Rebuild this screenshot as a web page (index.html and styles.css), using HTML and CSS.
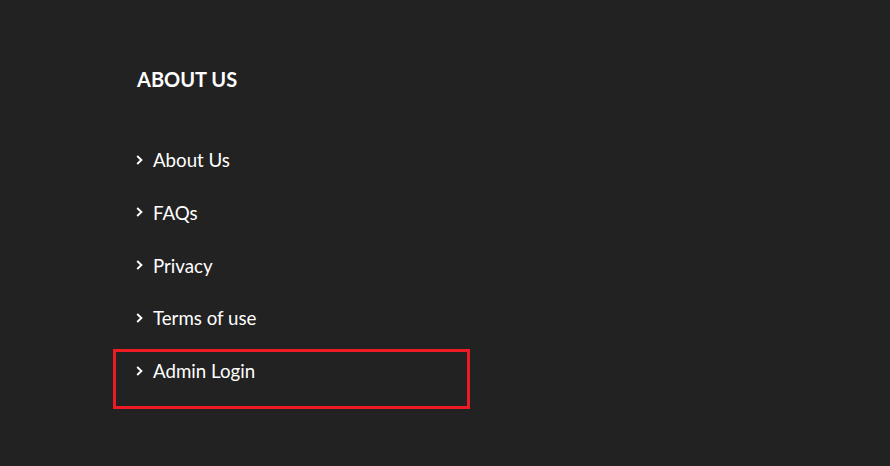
FILE: index.html
```html
<!DOCTYPE html>
<html>
<head>
<meta charset="utf-8">
<link rel="stylesheet" href="styles.css">
</head>
<body>
<footer class="footer">
  <section class="col">
    <h3 class="col-title">ABOUT US</h3>
    <ul class="links">
      <li><span class="chev"><svg width="8" height="12" viewBox="0 0 8 12"><path d="M1.2 2 L5.4 6 L1.2 10" fill="none" stroke="#fff" stroke-width="1.9"/></svg></span>About Us</li>
      <li><span class="chev"><svg width="8" height="12" viewBox="0 0 8 12"><path d="M1.2 2 L5.4 6 L1.2 10" fill="none" stroke="#fff" stroke-width="1.9"/></svg></span>FAQs</li>
      <li><span class="chev"><svg width="8" height="12" viewBox="0 0 8 12"><path d="M1.2 2 L5.4 6 L1.2 10" fill="none" stroke="#fff" stroke-width="1.9"/></svg></span>Privacy</li>
      <li><span class="chev"><svg width="8" height="12" viewBox="0 0 8 12"><path d="M1.2 2 L5.4 6 L1.2 10" fill="none" stroke="#fff" stroke-width="1.9"/></svg></span>Terms of use</li>
      <li class="highlighted"><span class="chev"><svg width="8" height="12" viewBox="0 0 8 12"><path d="M1.2 2 L5.4 6 L1.2 10" fill="none" stroke="#fff" stroke-width="1.9"/></svg></span>Admin Login<span class="mark"></span></li>
    </ul>
  </section>
</footer>
</body>
</html>
```
FILE: styles.css
```css
html, body {
  margin: 0;
  padding: 0;
  background: #222222;
  height: 100%;
}
.footer {
  font-family: Lato, "Open Sans", sans-serif;
  color: #ffffff;
  padding: 67px 0 0 137px;
}
.col-title {
  margin: 0;
  font-size: 20px;
  font-weight: 700;
  line-height: 24px;
  letter-spacing: 0;
}
.links {
  list-style: none;
  margin: 57px 0 0 -1px;
  padding: 0;
  display: flex;
  flex-direction: column;
  gap: 28.75px;
}
.links li {
  font-size: 18.7px;
  line-height: 24px;
  display: flex;
  align-items: center;
  position: relative;
}
.chev {
  display: inline-flex;
  width: 17px;
  margin-top: -1px;
}
.mark {
  position: absolute;
  left: -23px;
  top: -10px;
  width: 351px;
  height: 54px;
  border: 3px solid #ed1c24;
}
```
